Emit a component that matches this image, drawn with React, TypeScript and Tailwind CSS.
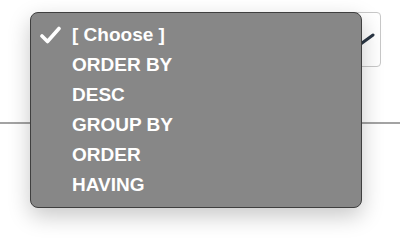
import React from 'react';

const options = ['[ Choose ]', 'ORDER BY', 'DESC', 'GROUP BY', 'ORDER', 'HAVING'];

const CheckMark = () => (
    <svg width="21" height="18" viewBox="0 0 21 18" className="block">
        <path d="M2 10 L7.5 15.5 L19 2.5" fill="none" stroke="#ffffff" strokeWidth="3.6" strokeLinecap="round" strokeLinejoin="round" />
    </svg>
);

const App: React.FC = () => {
    return (
        <div className="relative w-[400px] h-[238px] bg-white overflow-hidden" style={{ fontFamily: '"Liberation Sans", Arial, sans-serif' }}>
            {/* Form row behind the open menu */}
            <div className="pt-[12px] pl-[40px] pr-[19px]">
                <div className="h-[55px] rounded-[4px] border border-[#c8c8c8] bg-white flex items-center justify-end pr-[2px]">
                    <svg width="34" height="20" viewBox="0 0 34 20" className="block">
                        <path d="M1.5 5 L14.6 15.5 L29 5" fill="none" stroke="#2b3745" strokeWidth="3" strokeLinecap="round" strokeLinejoin="round" />
                    </svg>
                </div>
            </div>
            <div className="mt-[55px] h-[2px] bg-[#a3a3a3]" />

            {/* Native-style dropdown menu */}
            <div className="absolute left-[30px] top-[12px] w-[332px] h-[196px] rounded-[8px] bg-[#878787] border border-[#3f3f3f] shadow-[0_8px_22px_rgba(0,0,0,0.22)] pt-[7px]">
                {options.map((opt, i) => (
                    <div key={opt} className="flex items-center h-[30px] text-white font-bold text-[19px] leading-[30px]">
                        <div className="w-[41px] pl-[9px] flex items-center">
                            {i === 0 && <CheckMark />}
                        </div>
                        <span>{opt}</span>
                    </div>
                ))}
            </div>
        </div>
    );
};

export default App;
